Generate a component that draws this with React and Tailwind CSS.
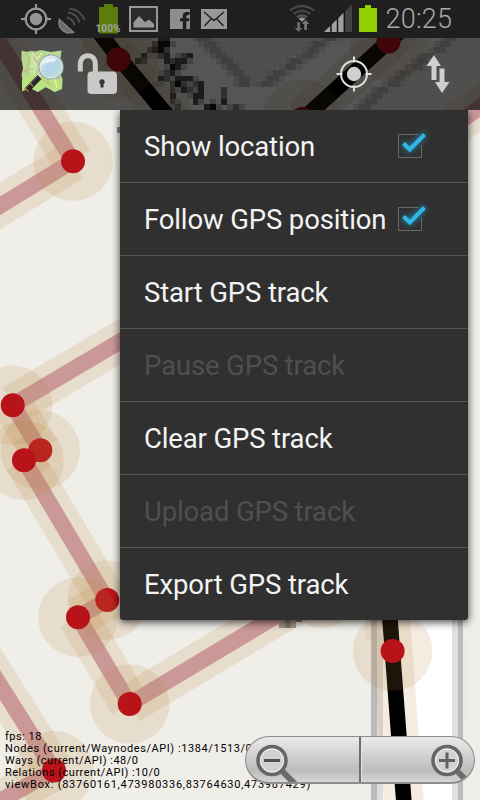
import React from "react";

const CELL = 5.75;
const GX = 135;
const GY = 41;

// Coarse raster tile: street label letters (a = darkest, d = lightest)
const LABEL = [
  "    bb",
  "   caad",
  "  cbac",
  " bddcb dcb",
  "bc   bcbbd",
  "     dabd",
  "    dcbd",
  "    bcdbbbd",
  "   dd cacdcb",
  "      cdbcdb   c",
  "      b  dbb   c",
  "      cd  bd d b",
  "      dc    bad dcd",
];
const SHADE = { a: "#181818", b: "#525252", c: "#8e8d8b", d: "#cbcac8" };

const labelCells = LABEL.flatMap((row, j) =>
  row.split("").map((c, i) =>
    c === " " ? null : { x: GX + i * CELL, y: GY + (j - 1) * CELL, fill: SHADE[c] }
  )
).filter(Boolean);

// Stair-stepped road casing between two points
function casing(x0, x1, rows) {
  const out = [];
  for (let r = -1; r < rows; r++) {
    const c = (x0 + ((x1 - x0) * r) / rows - GX) / CELL;
    const i = Math.round(c);
    [[-1, "#dededc"], [0, "#bebebe"], [1, "#c4c4c3"], [2, "#e6e6e4"]].forEach(([d, fill]) =>
      out.push({ x: GX + (i + d) * CELL, y: GY + r * CELL, fill })
    );
  }
  return out;
}
const roadCells = [...casing(205, 246, 8), ...casing(315, 251, 8), ...casing(439, 349, 12)];

const HALO = "#b98840";
const HALO_OP = 0.155;

const PINK = [
  [[-26.6, 0], [73, 161]],
  [[73, 161], [-40, 230.6]],
  [[12.7, 405], [300, 235]],
  [[300, 235], [500, 93]],
  [[12.7, 405], [40, 450]],
  [[40, 450], [24, 460]],
  [[24, 460], [107, 600]],
  [[107, 600], [78, 617]],
  [[78, 617], [129.5, 704]],
  [[129.5, 704], [323, 588]],
  [[-30, 637.5], [54, 770.5]],
  [[54, 770.5], [-30, 818]],
];
const BLACK = [
  [[90, 20], [118, 57]],
  [[116, 54], [190, 143]],
  [[302, 120], [388, 42]],
  [[386, 44], [412, 20]],
  [[387, 580], [404.5, 810]],
];
const NODES = [
  [73, 161.3], [12.7, 405.3], [40.3, 450.3], [24, 460.3], [107.3, 600], [78, 617.3],
  [129.7, 704], [54, 770.5], [392.6, 651], [118.5, 59.5], [388.5, 41.5], [302, 119], [323, 588],
];

function Line({ p, ...rest }) {
  return <line x1={p[0][0]} y1={p[0][1]} x2={p[1][0]} y2={p[1][1]} {...rest} />;
}

function MapCanvas() {
  return (
    <svg className="absolute inset-0" width="480" height="800" viewBox="0 0 480 800">
      <rect width="480" height="800" fill="#f0eee8" />
      <path d="M162 38H204L248 88L320 38H450L350 120H196Z" fill="#fff" />
      <g shapeRendering="crispEdges">
        {[...roadCells, ...labelCells].map((c, i) => (
          <rect key={i} x={c.x} y={c.y} width={CELL + 0.3} height={CELL + 0.3} fill={c.fill} />
        ))}
        <rect x="365" y="600" width="6" height="40" fill="#e6e5e0" />
        <rect x="371" y="600" width="6" height="200" fill="#bbbbbc" />
        <rect x="377" y="600" width="6" height="200" fill="#dededf" />
        <rect x="383" y="600" width="69" height="200" fill="#fff" />
        <rect x="452" y="600" width="6" height="200" fill="#e0e0e1" />
        <rect x="458" y="600" width="5" height="200" fill="#bbbbbc" />
        <rect x="463" y="640" width="6" height="80" fill="#ecebe6" />
        <rect x="117" y="127" width="6" height="6" fill="#8b8a87" />
        <rect x="279" y="616" width="6" height="12" fill="#9b9892" />
        <rect x="285" y="616" width="6" height="12" fill="#7d7870" />
        <rect x="291" y="616" width="5" height="12" fill="#a39d92" />
        <rect x="296" y="616" width="6" height="6" fill="#77736c" />
      </g>
      {[...PINK, ...BLACK].map((p, i) => (
        <Line key={i} p={p} stroke={HALO} strokeOpacity={HALO_OP} strokeWidth="40" />
      ))}
      {PINK.map((p, i) => <Line key={i} p={p} stroke="#cb9898" strokeWidth="16" />)}
      {BLACK.map((p, i) => <Line key={i} p={p} stroke="#000" strokeWidth="15.6" />)}
      {NODES.map(([x, y], i) => (
        <g key={i}>
          <circle cx={x} cy={y} r="39.8" fill={HALO} fillOpacity={HALO_OP} />
          <circle cx={x} cy={y} r="12" fill="#b9131a" />
        </g>
      ))}
    </svg>
  );
}

function StatusBar() {
  return (
    <header className="relative h-[38px] bg-[#1f1f1f]">
      <svg className="block" width="480" height="38" viewBox="0 0 480 38">
        <g fill="none" stroke="#959595" strokeWidth="2.2">
          <circle cx="36" cy="19" r="10.3" />
          <path d="M36 4v6M36 28v6M21 19h6M45 19h6" />
        </g>
        <circle cx="36" cy="19" r="6.2" fill="#959595" />
        <path d="M59.3 19.3C57 27 64 35 73.500 32.300Z" fill="#6a6a6a" stroke="#8a8a8a" strokeWidth="1.200" />
        <g fill="none" stroke="#4d4d4d" strokeWidth="2">
          <path d="M66.500 17.500Q73 18.500 74.500 25.500" />
          <path d="M68 12.500Q77.500 14 79.500 22.500" />
          <path d="M69.500 8.500Q81 10 84.500 20" />
        </g>
        <path d="M104 4h9v3h5v26.500H99V7h5Z" fill="#5b7d0c" />
        <path d="M130 7H157V31H130Z" fill="#2a2a2a" stroke="#979797" strokeWidth="2" />
        <path d="M133.500 27.500V22.500L139 16L145 22L149 19.500L154 24V27.500Z" fill="#979797" />
        <path d="M170 9H190V29H186.300V21.200H189L189.400 18.200H186.300V16.500Q186.300 15 188 15H189.500V12H187Q182.800 12 182.800 16V18.200H180V21.200H182.800V29H170Z" fill="#8e8e8e" />
        <rect x="201" y="9" width="26" height="20" fill="#989898" />
        <path d="M204 12L214 20.500L224 12M204.500 26L211 19M223.500 26L217 19" fill="none" stroke="#222" strokeWidth="1.500" />
        <g fill="none" stroke="#454545" strokeWidth="2.600">
          <path d="M290 10.500Q302 1.500 314 10.500" />
          <path d="M293.500 14Q302 7.500 310.500 14" />
          <path d="M297 17.200Q302 13.800 307 17.200" stroke="#555" />
        </g>
        <path d="M298.500 18.500Q302 16.500 305.500 18.500L302 22Z" fill="#999" />
        <path d="M297.200 22H300V28H302.300L298.600 32L294.800 28H297.200Z" fill="#686868" />
        <path d="M304.200 30H307V24H309.300L305.600 20L301.800 24H304.200Z" fill="#777" />
        <path d="M324 32L352 4.500V32Z" fill="#434343" />
        <path d="M324 32L344.500 12V32Z" fill="#a0a0a0" />
        <path d="M331 23V32M337.500 17V32M344.300 10V32" stroke="#161616" strokeWidth="1.500" />
        <path d="M365 5h6v3h6v24H359V8h6Z" fill="#8fd000" />
        <text x="95.500" y="32.400" textLength="25" fill="#a0a0a0" className="font-['Roboto'] text-[10px] font-bold">100%</text>
        <text x="385.500" y="28" textLength="66.500" fill="#a8a8a8" className="font-['Roboto'] text-[27px] font-light">20:25</text>
      </svg>
    </header>
  );
}

function AppIcon() {
  return (
    <svg width="44" height="46" viewBox="0 0 44 46">
      <defs>
        <linearGradient id="lens" x1="0" y1="0" x2="1" y2="1">
          <stop offset="0" stopColor="#dcecf2" />
          <stop offset=".5" stopColor="#b4d3e4" />
          <stop offset="1" stopColor="#bfe3c4" />
        </linearGradient>
      </defs>
      <path d="M1.500 2.500Q6 4.500 10.500 3L16 3.500Q21 1.500 25 3L31 4Q36 3 41.500 2.500L40.500 10L42.500 17L40 24L42.500 31L42 41L35 44L26 39L18 44L10 40L2 43.500L3 35L1.500 27L3 20L1.500 11Z" fill="#b5da91" />
      <path d="M12 3L10 20L12 40L18 44L19 20ZM27 3.500L26 39L35 44L33 20Z" fill="#c8e6a8" />
      <path d="M2 32L12 25L19 31L30 26L42 34L42 40L35 43L26 38L18 43L10 39L2 42Z" fill="#b9e37f" />
      <path d="M5 5Q12 11 8 17T10 29M14 4Q13 12 19 17L16 27M3 24Q9 19 13 22M30 30Q36 32 41 29M25 28L31 38M18 33Q24 29 29 37" fill="none" stroke="#d5a182" strokeWidth=".8" />
      <path d="M13 5L17 11L22 5M34 27L37 40" fill="none" stroke="#f2e9b4" strokeWidth="1.300" />
      <path d="M21.500 26L18.500 29.500" stroke="#c9d3d3" strokeWidth="2.500" />
      <path d="M19.500 29L6.500 42.500" stroke="#262626" strokeWidth="5.500" />
      <path d="M17.500 28.500L6.500 39.500" stroke="#666" strokeWidth="1" />
      <path d="M9.800 35L13 38.200M5 40L8.500 43.500" stroke="#b89437" strokeWidth="1.200" />
      <circle cx="31" cy="19" r="12" fill="url(#lens)" stroke="#9caeaf" strokeWidth="1.400" />
      <circle cx="31" cy="19" r="11" fill="none" stroke="#e4eeee" strokeWidth="1" />
      <path d="M25.500 20.500Q25 16 29 16Q32 19 35.500 17Q36 22 32 24L28 23Z" fill="#b3d2ee" />
      <path d="M21.500 15Q25 8 35 10Q38 13 32 14Q24 14 21.500 18Z" fill="#eff5f4" opacity=".85" />
    </svg>
  );
}

function ActionBar() {
  return (
    <div className="relative flex h-[72px] bg-black/[0.667]">
      <div className="ml-[20px] mt-[10px]"><AppIcon /></div>
      <svg className="ml-[12.500px] mt-[15px]" width="42" height="44" viewBox="0 0 42 44">
        <path d="M3.300 18.500V11C3.300 6 6.500 2.800 11 2.800S18.300 6 18.300 11V21" fill="none" stroke="#c9c9c9" strokeWidth="5" />
        <rect x="10.500" y="18.500" width="29.500" height="22.500" rx="4" fill="#c9c9c9" />
        <path d="M25 26.200a2.700 2.700 0 0 1 1.500 5V34.500h-3V31.200A2.700 2.700 0 0 1 25 26.200Z" fill="#333" />
      </svg>
      <svg className="ml-auto mt-[17px]" width="38" height="38" viewBox="0 0 38 38">
        <g fill="none" stroke="#e0dfdd" strokeWidth="2">
          <circle cx="19" cy="19" r="13" />
          <path d="M19 1.500v6M19 30.500v6M1.500 19h6M30.500 19h6" />
        </g>
        <circle cx="19" cy="19" r="7.200" fill="#d0d0d0" />
      </svg>
      <svg className="ml-[53px] mr-[29px] mt-[16px]" width="25" height="40" viewBox="0 0 25 40">
        <path d="M5.500 26H10.500V12H15L8 1L0.500 12H5.500Z M13.500 14.500H18.500V28H23.500L16 39L9 28H13.500Z" fill="#cfcfcf" />
      </svg>
    </div>
  );
}

function Check() {
  return (
    <svg className="absolute left-[276px] top-[21px] overflow-visible" width="30" height="30" viewBox="0 0 30 30">
      <path d="M22.500 3.500H2.500V26.500H25.500V14" fill="none" stroke="#686868" strokeWidth="1" />
      <path d="M7.500 12.500L13.800 18.500L28.500 3.500" fill="none" stroke="#33b5e5" strokeWidth="4" className="[filter:drop-shadow(0_0_3px_#1f9ccc)]" />
    </svg>
  );
}

const ITEMS = [
  { label: "Show location", check: true },
  { label: "Follow GPS position", check: true },
  { label: "Start GPS track" },
  { label: "Pause GPS track", disabled: true },
  { label: "Clear GPS track" },
  { label: "Upload GPS track", disabled: true },
  { label: "Export GPS track" },
];

function Menu() {
  return (
    <ul className="relative ml-[120px] h-[510px] w-[348px] rounded-b-[3px] bg-[#303030] shadow-[0_2px_8px_rgba(0,0,0,0.75)] [clip-path:inset(0_-20px_-20px_-20px)]">
      {ITEMS.map((it, i) => (
        <li
          key={it.label}
          className={`relative flex h-[73px] items-center pt-[2px] pl-6 font-['Roboto'] text-[27.5px] leading-none tracking-[-0.14px] whitespace-nowrap ${i < 6 ? "border-b border-[#535353]" : "pb-[1px]"} ${it.disabled ? "text-[#4f4f4f]" : "text-[#f3f3f3]"}`}
        >
          {it.label}
          {it.check && <Check />}
        </li>
      ))}
    </ul>
  );
}

function DebugText() {
  return (
    <div className="absolute left-[5px] top-[731px] font-['Roboto'] text-[11px] leading-[12px] tracking-[0.5px] whitespace-nowrap text-black">
      <p>fps: 18</p>
      <p className="tracking-[0.570px]">Nodes (current/Waynodes/API) :1384/1513/0</p>
      <p>Ways (current/API) :48/0</p>
      <p>Relations (current/API) :10/0</p>
      <p className="tracking-[0.745px]">viewBox: (83760161,473980336,83764630,473987429)</p>
    </div>
  );
}

function ZoomControls() {
  return (
    <div className="absolute left-[245px] top-[736px] flex h-[48px] w-[230px] overflow-hidden rounded-[24px] border border-[#8e8e8a] border-b-2 bg-linear-to-b from-[#ebebeb] via-[#bcbcbc] via-75% to-[#d6d6d6]">
      <div className="w-[115px] border-r-2 border-[#6f6f6a]">
        <svg width="60" height="45" viewBox="0 0 60 45">
          <path d="M36 34L50 48" stroke="#6b6b6b" strokeWidth="6" />
          <circle cx="26" cy="23.500" r="14" fill="#d2d2d2" stroke="#666" strokeWidth="3.600" />
          <circle cx="26" cy="23.500" r="11.500" fill="none" stroke="#efefef" strokeWidth="1" />
          <path d="M18 23.500H34" stroke="#505050" strokeWidth="2.800" />
        </svg>
      </div>
      <div className="flex flex-1 justify-end border-l border-[#e4e4e4]">
        <svg width="60" height="45" viewBox="0 0 60 45">
          <path d="M43 34L57 48" stroke="#6b6b6b" strokeWidth="6" />
          <circle cx="33" cy="23.500" r="14" fill="#d2d2d2" stroke="#666" strokeWidth="3.600" />
          <circle cx="33" cy="23.500" r="11.500" fill="none" stroke="#efefef" strokeWidth="1" />
          <path d="M25 23.500H41M33 15.500V31.500" stroke="#606060" strokeWidth="3" />
        </svg>
      </div>
    </div>
  );
}

export default function App() {
  return (
    <main className="relative h-[800px] w-[480px] overflow-hidden">
      <MapCanvas />
      <StatusBar />
      <ActionBar />
      <Menu />
      <DebugText />
      <ZoomControls />
    </main>
  );
}
